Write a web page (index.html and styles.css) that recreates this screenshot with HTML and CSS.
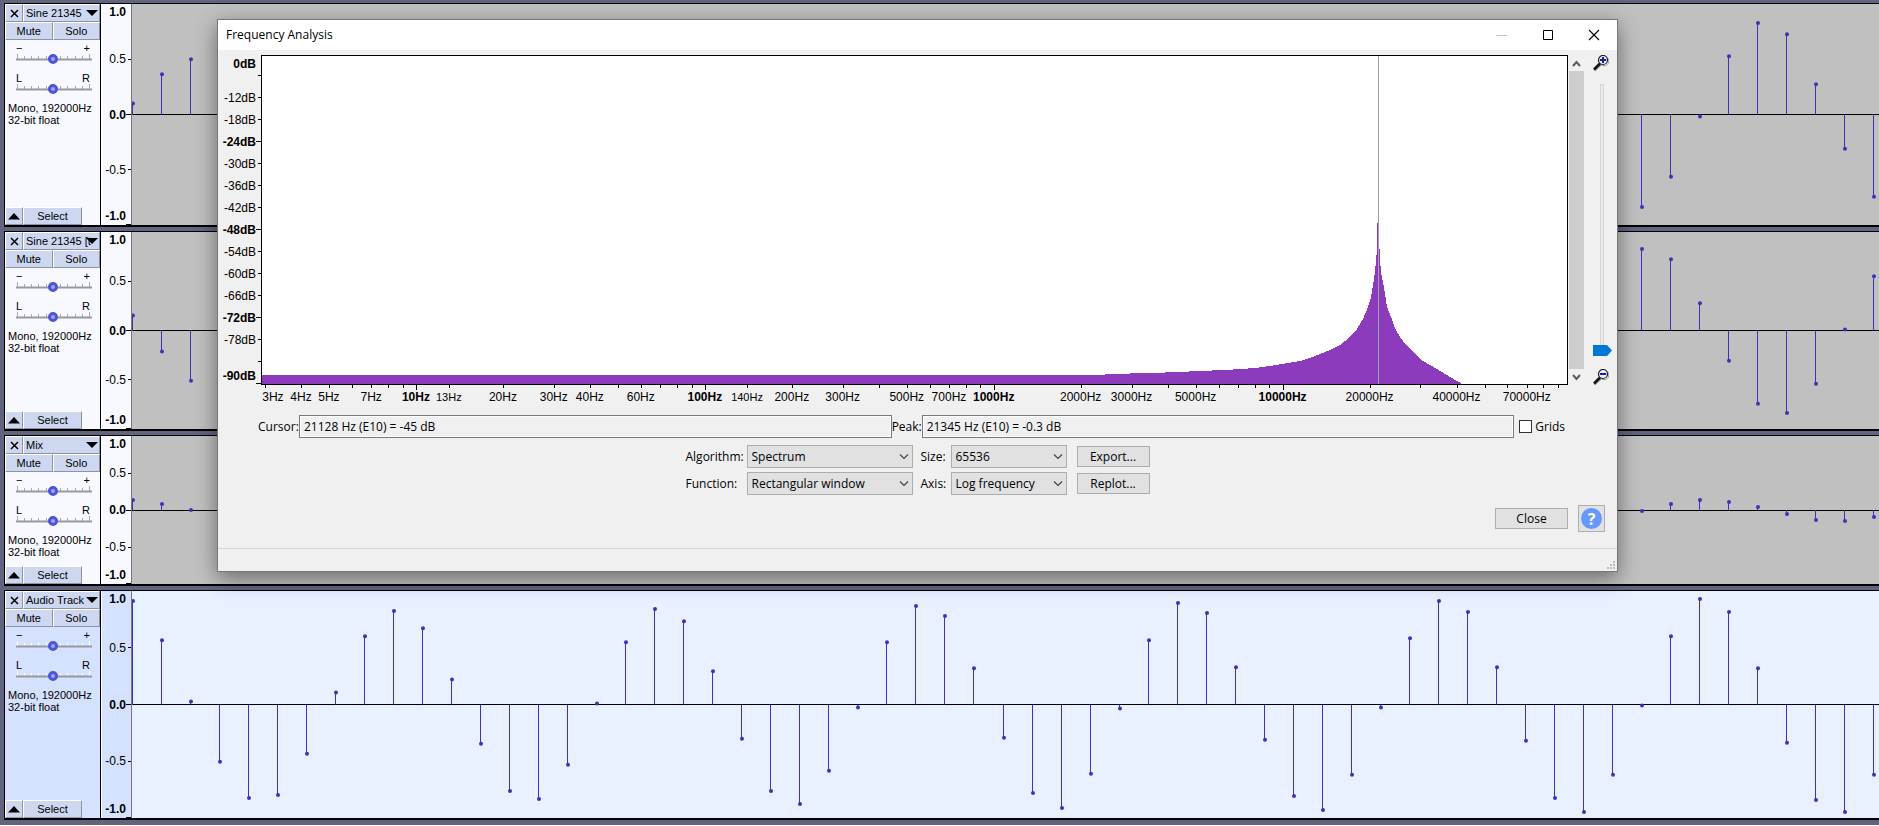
FILE: index.html
```html
<!DOCTYPE html>
<html lang="en">
<head>
<meta charset="utf-8">
<title>Frequency Analysis</title>
<link rel="stylesheet" href="styles.css">
</head>
<body>
<main class="app" id="tracks"></main>

<section class="dialog" role="dialog" aria-labelledby="dialog-title">
  <header class="titlebar">
    <h1 class="title" id="dialog-title">Frequency Analysis</h1>
    <button class="winbtn" type="button" aria-label="Minimize" disabled><svg width="12" height="12"><path d="M0 6.500h11" stroke="#c4c4c4"/></svg></button>
    <button class="winbtn" type="button" aria-label="Maximize"><svg width="12" height="12"><path d="M1.500 1.500h9v9h-9z" fill="none" stroke="#000"/></svg></button>
    <button class="winbtn" type="button" aria-label="Close window"><svg width="12" height="12"><path d="M1 1l10 10M11 1L1 11" stroke="#000" stroke-width="1.100"/></svg></button>
  </header>

  <div class="plot">
    <svg class="db-axis" id="db-axis"></svg>
    <svg class="graph" id="graph">
      <svg width="100%" height="100%" viewBox="262 56 1305 328" preserveAspectRatio="none">
        <polygon fill="#8c3bbd" shape-rendering="crispEdges" points="261,375 1100,375 1110,374 1150,373 1180,372 1198,371 1225,370 1240,369 1255,368 1270,366 1282,364 1300,361 1310,358 1320,354 1330,350 1340,345 1350,337 1357,329 1363,319 1368,307 1371,297 1373,285 1375,272 1376,260 1377,250 1377,223 1378,223 1379,239 1380,259 1381,272 1383,282 1385,294 1387,307 1391,317 1395,328 1400,337 1407,346 1413,352 1423,361 1437,369 1450,377 1464,385 261,385"/>
        <path d="M1378.500 55v330" stroke="#a0a0a0"/>
      </svg>
    </svg>
    <div class="scrollbar">
      <button class="arrow" type="button" aria-label="Scroll up"><svg width="9" height="7"><path d="M1 6l3.500-4L8 6" fill="none" stroke="#5c5c5c" stroke-width="2"/></svg></button>
      <div class="scroll-thumb"></div>
      <button class="arrow" type="button" aria-label="Scroll down"><svg width="9" height="7"><path d="M1 1l3.500 4L8 1" fill="none" stroke="#5c5c5c" stroke-width="2"/></svg></button>
    </div>
    <div class="zoom">
      <svg width="16" height="16" role="img" aria-label="Zoom in"><path d="M1.500 15.500l6-6" stroke="#999" stroke-width="2.500"/><circle cx="11" cy="6" r="4.800" fill="#fff" stroke="#999"/><path d="M1 14.500l6-6" stroke="#111" stroke-width="2.500"/><circle cx="10" cy="5" r="4.500" fill="#eef" stroke="#181828" stroke-width="1.200"/><path d="M7 5h6M10 2v6" stroke="#1c1c9c" stroke-width="2"/></svg>
      <div class="zoom-slider">
        <div class="zoom-line"></div>
        <svg class="zoom-thumb" width="19" height="11"><path d="M0 0h14l5 5.500-5 5.500H0z" fill="#0078d7"/></svg>
        <input class="zoom-input" type="range" min="0" max="100" value="4" aria-label="Vertical zoom">
      </div>
      <svg width="16" height="16" role="img" aria-label="Zoom out"><path d="M1.500 15.500l6-6" stroke="#999" stroke-width="2.500"/><circle cx="11" cy="6" r="4.800" fill="#fff" stroke="#999"/><path d="M1 14.500l6-6" stroke="#111" stroke-width="2.500"/><circle cx="10" cy="5" r="4.500" fill="#eef" stroke="#181828" stroke-width="1.200"/><path d="M7 5h6" stroke="#1c1c9c" stroke-width="2"/></svg>
    </div>
    <svg class="hz-axis" id="hz-axis"></svg>
  </div>

  <div class="readout">
    <label class="cursor-label" for="cursor">Cursor:</label>
    <input class="field" id="cursor" type="text" readonly value="21128 Hz (E10) = -45 dB">
    <label class="peak-label" for="peak">Peak:</label>
    <input class="field" id="peak" type="text" readonly value="21345 Hz (E10) = -0.3 dB">
    <label class="grids"><input class="check" type="checkbox">Grids</label>
  </div>

  <div class="options">
    <label for="algorithm">Algorithm:</label>
    <div class="combo"><select id="algorithm"><option>Spectrum</option></select><svg class="chev" width="10" height="6"><path d="M1 .5l4 4 4-4" fill="none" stroke="#444" stroke-width="1.200"/></svg></div>
    <label for="size">Size:</label>
    <div class="combo"><select id="size"><option>65536</option></select><svg class="chev" width="10" height="6"><path d="M1 .5l4 4 4-4" fill="none" stroke="#444" stroke-width="1.200"/></svg></div>
    <button class="btn" type="button">Export...</button>
    <label for="function">Function:</label>
    <div class="combo"><select id="function"><option>Rectangular window</option></select><svg class="chev" width="10" height="6"><path d="M1 .5l4 4 4-4" fill="none" stroke="#444" stroke-width="1.200"/></svg></div>
    <label for="axis">Axis:</label>
    <div class="combo"><select id="axis"><option>Log frequency</option></select><svg class="chev" width="10" height="6"><path d="M1 .5l4 4 4-4" fill="none" stroke="#444" stroke-width="1.200"/></svg></div>
    <button class="btn" type="button">Replot...</button>
  </div>

  <div class="actions">
    <button class="btn" type="button">Close</button>
    <button class="help" type="button" aria-label="Help"><span class="help-mark">?</span></button>
  </div>

  <footer class="status">
    <svg width="9" height="9" fill="#bfbfbf"><path d="M6 0h2v2H6zM3 3h2v2H3zM6 3h2v2H6zM0 6h2v2H0zM3 6h2v2H3zM6 6h2v2H6z"/></svg>
  </footer>
</section>
<script src="app.js"></script>
</body>
</html>
```
FILE: styles.css
```css
* { box-sizing: border-box; }

body {
  margin: 0;
  background: #fff;
  color: #000;
  font: 11px/12px "Liberation Sans", Arial, sans-serif;
  overflow: hidden;
}

button, input, select { font: inherit; color: inherit; margin: 0; }
svg { display: block; flex: none; }

/* Track list */
.app {
  height: calc(100vh - 1px);
  display: grid;
  grid-template-rows: 224fr 200fr 151fr 230fr;
  gap: 4px;
  padding: 3px 0 5px 4px;
  background: #60647f;
}

.track {
  display: flex;
  min-height: 0;
  border: solid #000;
  border-width: 1px 0 2px 1px;
  background: #f8f9ff;
}
.track.selected { background: #d4e1ff; }

.panel {
  width: 96px;
  flex: none;
  display: flex;
  flex-direction: column;
  border-right: 1px solid #000;
}
.row { display: flex; }
.row.foot { margin-top: auto; }

.tbtn {
  height: 18px;
  padding: 0;
  border: 1px solid;
  border-color: #fff #8c93a5 #8c93a5 #fff;
  background: #cdd8f0;
  display: flex;
  align-items: center;
  justify-content: center;
  white-space: nowrap;
}
.tbtn.icon { width: 18px; flex: none; }
.tbtn.name { position: relative; flex: 1; justify-content: flex-start; padding: 0 2px; }
.tbtn.half { flex: 1; }
.tbtn.select { width: 59px; }
.name-arrow { position: absolute; right: 1px; top: 5px; }

.sliders { padding: 2px 8px 0 11px; }
.ends { display: flex; justify-content: space-between; padding: 0 2px 0 0; height: 12px; }
.slide { position: relative; height: 18px; }
.slide svg { width: 76px; height: 16px; }
.slide input {
  position: absolute;
  inset: 0;
  width: 100%;
  height: 10px;
  appearance: none;
  background: none;
}
.slide input::-webkit-slider-thumb {
  appearance: none;
  width: 10px;
  height: 10px;
  border-radius: 50%;
  border: 3px solid #4c54d8;
  background: #a0a8e4;
}
.info { margin: 0; padding: 0 3px; }

.ruler { width: 30px; flex: none; font-size: 12px; }
.wave { flex: 1; min-width: 0; height: 100%; border-left: 1px solid #777; background: #c0c0c0; }
.selected .wave { background: #e8f1ff; }
.strong { font-weight: bold; }

/* Dialog window */
.dialog {
  position: absolute;
  top: 19px;
  left: 217px;
  right: 261px;
  border: 1px solid #777;
  background: #f0f0f0;
  box-shadow: 0 6px 20px rgba(0, 0, 0, .45);
  font: 12px/16px "Open Sans", "Noto Sans", sans-serif;
}

.titlebar { display: flex; height: 30px; background: #fff; align-items: center; padding-left: 8px; }
.title { flex: 1; margin: 0; font: inherit; }
.winbtn { width: 46px; height: 28px; border: 0; padding: 0; background: none; display: grid; place-items: center; }

.plot {
  display: grid;
  grid-template-columns: 43px 1fr 17px 32px;
  grid-template-rows: 330px 30px;
  padding-top: 5px;
  font: 12px "Liberation Sans", Arial, sans-serif;
}
.db-axis { width: 100%; height: 100%; overflow: visible; }
.graph { width: 100%; height: 100%; background: #fff; border: 1px solid #000; }
.hz-axis { grid-column: 2; width: 100%; height: 100%; overflow: visible; }
.small { font-size: 11px; }

.scrollbar { display: flex; flex-direction: column; margin: 0 1px; }
.arrow { height: 16px; border: 0; padding: 0; background: none; display: grid; place-items: center; }
.scroll-thumb { flex: 1; background: #cdcdcd; }

.zoom { display: flex; flex-direction: column; padding-left: 8px; }
.zoom-slider { flex: 1; position: relative; padding: 13px 0 20px 7px; }
.zoom-line { width: 4px; height: 100%; border: 1px solid #d6d6d6; background: #e7eaea; }
.zoom-thumb { position: absolute; left: 0; bottom: 13px; }
.zoom-input { position: absolute; inset: 13px 4px 13px 0; width: 20px; height: auto; writing-mode: vertical-lr; direction: rtl; opacity: 0; }

.readout { display: flex; align-items: center; padding-left: 40px; padding-right: 52px; }
.cursor-label, .peak-label { white-space: nowrap; }
.cursor-label { width: 41px; }
.peak-label { width: 30px; }
.field {
  flex: 1;
  min-width: 0;
  height: 23px;
  padding: 0 4px;
  border: 1px solid #7a7a7a;
  outline: 1px solid #fff;
  outline-offset: -2px;
  background: #f0f0f0;
}
.grids { display: flex; align-items: center; gap: 3px; padding-left: 5px; }
.check { appearance: none; width: 13px; height: 13px; border: 1px solid #333; background: #fff; }

.options {
  display: grid;
  grid-template-columns: 61px 166px 38px 116px 83px;
  gap: 4px 0;
  justify-content: center;
  align-items: center;
  padding-top: 7px;
}
.options .combo + label { padding-left: 8px; }
.options .btn { margin-left: 10px; }
.combo { position: relative; height: 23px; }
.combo select {
  appearance: none;
  width: 100%;
  height: 100%;
  padding: 0 4px;
  border: 1px solid #adadad;
  border-radius: 0;
  background: #e1e1e1;
}
.chev { position: absolute; right: 4px; top: 9px; }
.btn { width: 73px; height: 21px; padding: 0; border: 1px solid #adadad; background: #e1e1e1; line-height: 16px; }

.actions { display: flex; justify-content: flex-end; align-items: center; gap: 10px; padding: 10px 12px 16px 0; }
.help { width: 27px; height: 27px; padding: 2px; border: 1px solid #adadad; background: #e1e1e1; }
.help-mark {
  display: grid;
  place-items: center;
  height: 21px;
  border-radius: 50%;
  background: #6699ff;
  color: #fff;
  font: bold 16px/20px "Open Sans", sans-serif;
}
.status { height: 23px; border-top: 1px solid #d7d7d7; display: flex; justify-content: flex-end; align-items: flex-end; padding: 0 1px 1px 0; }
```
FILE: app.js
```js
const STEP = 29.017;

const tracks = [
  { name: 'Sine 21345', half: 110, start: [11, 40, 55], end: [-92, -62, -2, 58, 91, 80, 30, -34, -82] },
  { name: 'Sine 21345 [t', half: 98, start: [15, -21, -50], end: [81, 71, 27, -30, -73, -82, -53, 1, 54] },
  { name: 'Mix', half: 74, start: [10, 6, 0], end: [-1, 6, 10, 8, 3, -4, -10, -11, -7] },
  { name: 'Audio Track', half: 113, selected: true, end: [], start: [
    103, 64, 3, -57, -93, -90, -49, 12, 68, 93, 76, 25, -39, -86, -94, -60, 1, 62, 95, 83, 33,
    -34, -86, -99, -66, -3, 62, 98, 88, 36, -33, -88, -103, -69, -4, 64, 101, 91, 37, -35, -91,
    -105, -70, -3, 66, 103, 92, 37, -36, -93, -107, -70, -1, 68, 105, 92, 36, -38, -95, -107, -70] }
];

function wave(t) {
  const points = t.start.map((v, i) => [i, v]).concat(t.end.map((v, i) => [52 + i, v]));
  const stems = points.map(([k, v]) => {
    const x = Math.round(k * STEP);
    const y = 50 - v / t.half * 50;
    return `<line x1="${x + 0.5}" x2="${x + 0.5}" y1="50%" y2="${y}%" stroke="#3a35b4"/>` +
      `<circle cx="${x + 1}" cy="${y}%" r="2" fill="#3a35b4"/>`;
  }).join('');
  return `<svg class="wave"><line x2="100%" y1="50%" y2="50%" stroke="#000" shape-rendering="crispEdges"/>${stems}</svg>`;
}

function ruler() {
  return `<svg class="ruler" height="100%" text-anchor="end">
    <rect width="1" height="100%" fill="#fff"/>
    <text class="strong" x="25" y="12">1.0</text>
    <text x="25" y="25%" dy="4">0.5</text>
    <text class="strong" x="25" y="50%" dy="4">0.0</text>
    <text x="25" y="75%" dy="4">-0.5</text>
    <text class="strong" x="25" y="100%" dy="-5">-1.0</text>
    <g stroke="#000" shape-rendering="crispEdges"><line x1="27" x2="30" y1="25%" y2="25%"/><line x1="25" x2="30" y1="50%" y2="50%"/>
    <line x1="27" x2="30" y1="75%" y2="75%"/></g>
    <svg y="100%" overflow="visible"><rect x="25" y="-1" width="5" height="1"/></svg>
  </svg>`;
}

function slider(label, color) {
  const ticks = [1, 8, 15, 22, 30, 44, 51, 59, 66, 73]
    .map(x => `<path d="M${x + 0.5} ${x === 1 || x === 73 ? 0 : 2}V5" stroke="${color}"/>`).join('');
  return `<div class="slide"><svg>${ticks}<path d="M0 5.500h76" stroke="#999" stroke-width="2"/></svg>
    <input type="range" value="48" aria-label="${label}"></div>`;
}

document.getElementById('tracks').innerHTML = tracks.map(t => `
  <section class="track${t.selected ? ' selected' : ''}">
    <div class="panel">
      <div class="row">
        <button class="tbtn icon" type="button" aria-label="Close track"><svg width="9" height="9"><path d="M1 1l7 7M8 1L1 8" stroke="#000" stroke-width="1.500"/></svg></button>
        <button class="tbtn name" type="button">${t.name}<svg class="name-arrow" width="12" height="7"><path d="M0 0h12L6 6z"/></svg></button>
      </div>
      <div class="row">
        <button class="tbtn half" type="button">Mute</button>
        <button class="tbtn half" type="button">Solo</button>
      </div>
      <div class="sliders">
        <div class="ends"><span>&#8722;</span><span>+</span></div>
        ${slider('Gain', t.selected ? '#fff' : '#aaa')}
        <div class="ends"><span>L</span><span>R</span></div>
        ${slider('Pan', t.selected ? '#fff' : '#aaa')}
      </div>
      <p class="info">Mono, 192000Hz<br>32-bit float</p>
      <div class="row foot">
        <button class="tbtn icon" type="button" aria-label="Collapse"><svg width="12" height="7"><path d="M0 6.500h12L6 0z"/></svg></button>
        <button class="tbtn select" type="button">Select</button>
      </div>
    </div>
    ${ruler()}
    ${wave(t)}
  </section>`).join('');

// Level axis: 22px for every 6 dB
let db = '';
for (let i = 1; i <= 15; i++) {
  const y = Math.min(20 + (i - 1) * 22, 328);
  const major = i % 4 === 0 || i === 15;
  db += `<rect x="${major ? 38 : 40}" y="${y}" width="${major ? 5 : 3}" height="1"/>`;
  if (i === 1 || i === 14) continue;
  db += `<text x="38" y="${i === 15 ? 325 : y + 5}"${major ? ' class="strong"' : ''}>-${i * 6}dB</text>`;
}
document.getElementById('db-axis').innerHTML =
  `<g text-anchor="end"><text class="strong" x="38" y="13">0dB</text>${db}</g>`;

// Frequency axis: logarithmic
const position = f => (Math.log10(f) - 0.4637) / 4.5242 * 100;
const labels = [3, 4, 5, 7, 10, 13, 20, 30, 40, 60, 100, 140, 200, 300, 500, 700, 1000, 2000, 3000, 5000, 10000, 20000, 40000, 70000];
const ticks = new Set(labels);
for (let e = 0; e < 5; e++) for (let m = 1; m < 10; m++) if (m * 10 ** e >= 3) ticks.add(m * 10 ** e);
let hz = '';
for (const f of ticks) {
  hz += `<rect x="${position(f)}%" y="0" width="1" height="${Number.isInteger(Math.log10(f)) ? 5 : 3}"/>`;
}
for (const f of labels) {
  const cls = Number.isInteger(Math.log10(f)) ? 'strong' : (f === 13 || f === 140 ? 'small' : '');
  hz += `<text class="${cls}" x="${position(f)}%" dx="${f === 3 ? 8 : 0}" y="16" text-anchor="middle">${f}Hz</text>`;
}
document.getElementById('hz-axis').innerHTML = `<g shape-rendering="crispEdges">${hz}</g>`;
```
